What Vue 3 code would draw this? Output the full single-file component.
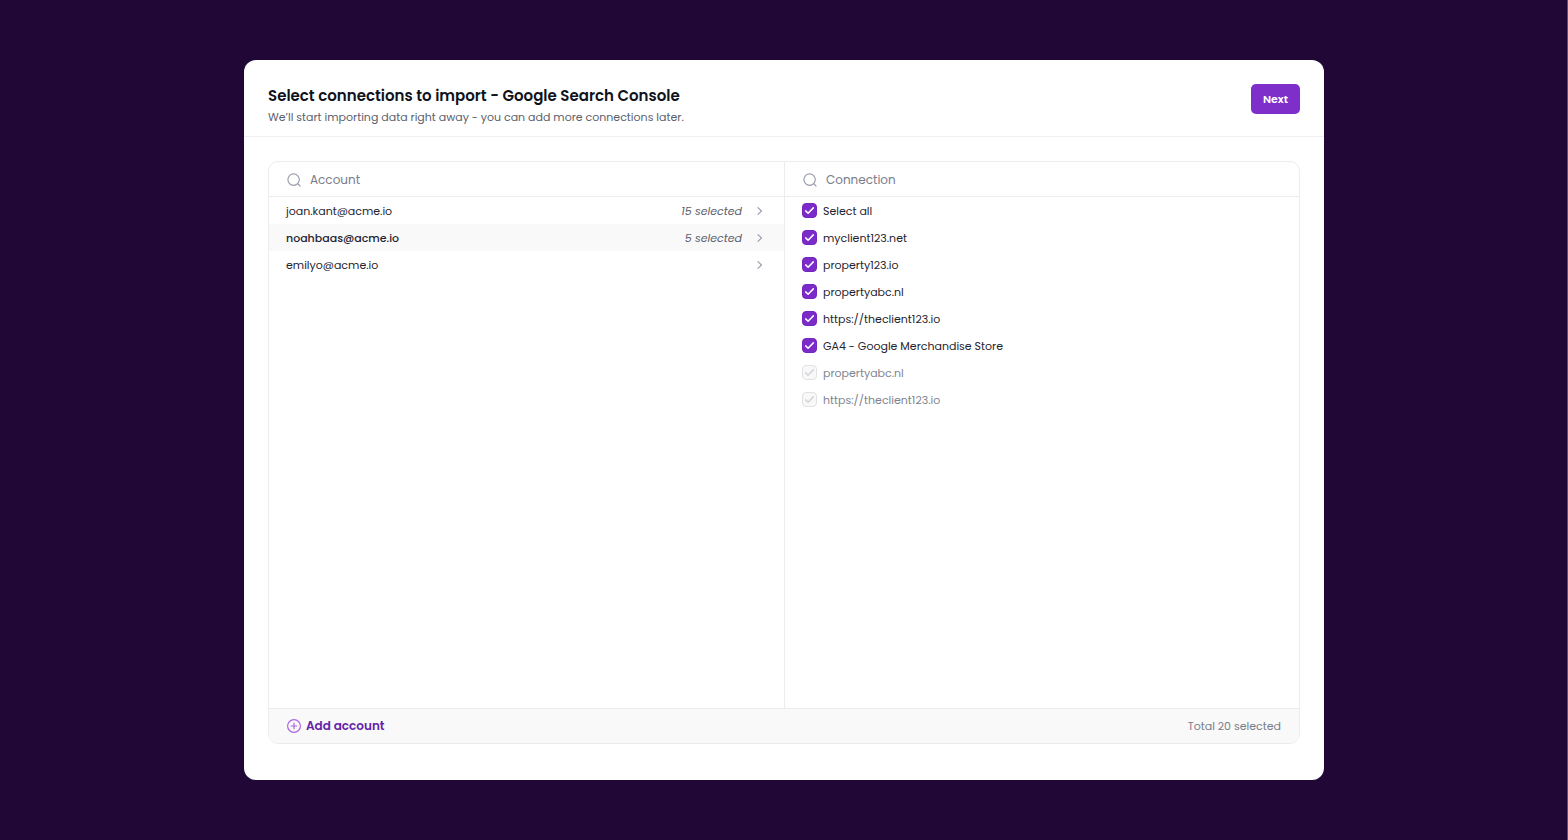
<script setup>
import { ref, computed } from 'vue'

const accountQuery = ref('')
const connectionQuery = ref('')
const active = ref('noahbaas@acme.io')

const accounts = ref([
  { email: 'joan.kant@acme.io', selected: 15 },
  { email: 'noahbaas@acme.io', selected: 5 },
  { email: 'emilyo@acme.io', selected: 0 },
])

const connections = ref([
  { id: 'all', name: 'Select all', checked: true, disabled: false },
  { id: 'c1', name: 'myclient123.net', checked: true, disabled: false },
  { id: 'c2', name: 'property123.io', checked: true, disabled: false },
  { id: 'c3', name: 'propertyabc.nl', checked: true, disabled: false },
  { id: 'c4', name: 'https://theclient123.io', checked: true, disabled: false },
  { id: 'c5', name: 'GA4 - Google Merchandise Store', checked: true, disabled: false },
  { id: 'c6', name: 'propertyabc.nl', checked: true, disabled: true },
  { id: 'c7', name: 'https://theclient123.io', checked: true, disabled: true },
])

const total = computed(() => accounts.value.reduce((sum, a) => sum + a.selected, 0))
</script>

<template>
  <div class="page">
    <main class="dialog">
      <header class="head">
        <div>
          <h1 class="title">Select connections to import - Google Search Console</h1>
          <p class="subtitle">We’ll start importing data right away - you can add more connections later.</p>
        </div>
        <button type="button" class="next">Next</button>
      </header>

      <section class="panel">
        <div class="columns">
          <div class="column">
            <label class="search">
              <svg class="search-icon" viewBox="0 0 14 14" aria-hidden="true">
                <circle cx="6.6" cy="6.6" r="5.7" />
                <path d="M10.7 10.7 13 13" />
              </svg>
              <input v-model="accountQuery" class="search-input" type="text" placeholder="Account" aria-label="Account" />
            </label>
            <button
              v-for="a in accounts"
              :key="a.email"
              type="button"
              class="account"
              :class="{ active: a.email === active }"
              @click="active = a.email"
            >
              <span class="email">{{ a.email }}</span>
              <span v-if="a.selected" class="count">{{ a.selected }} selected</span>
              <svg class="chevron" viewBox="0 0 6 8" aria-hidden="true"><path d="M1 .7 4.5 4 1 7.3" /></svg>
            </button>
          </div>

          <div class="column">
            <label class="search">
              <svg class="search-icon" viewBox="0 0 14 14" aria-hidden="true">
                <circle cx="6.6" cy="6.6" r="5.7" />
                <path d="M10.7 10.7 13 13" />
              </svg>
              <input v-model="connectionQuery" class="search-input" type="text" placeholder="Connection" aria-label="Connection" />
            </label>
            <label v-for="c in connections" :key="c.id" class="connection" :class="{ disabled: c.disabled }">
              <span class="box">
                <input v-model="c.checked" class="check" type="checkbox" :disabled="c.disabled" />
                <svg class="tick" viewBox="0 0 15 15" aria-hidden="true"><path d="M3.7 7.9 6.1 10.2 11.3 4.9" /></svg>
              </span>
              <span>{{ c.name }}</span>
            </label>
          </div>
        </div>

        <footer class="foot">
          <button type="button" class="add">
            <svg class="plus" viewBox="0 0 14 14" aria-hidden="true">
              <circle cx="7" cy="7" r="6.4" />
              <path d="M7 4.2v5.6M4.2 7h5.6" />
            </svg>
            Add account
          </button>
          <span class="total">Total {{ total }} selected</span>
        </footer>
      </section>
    </main>
  </div>
</template>

<style>
body {
  background: #200736;
}
</style>

<style scoped>
.page {
  box-sizing: border-box;
  min-height: 100vh;
  padding: 60px 24px;
  display: flex;
  justify-content: center;
  background: #200736;
  box-shadow: inset -1px 0 #5f4c70;
  font-family: Poppins, Inter, 'Open Sans', sans-serif;
  font-size: 11px;
  line-height: 16px;
  color: #1f2430;
}

button,
input {
  font-family: inherit;
  margin: 0;
}

button {
  border: 0;
  background: none;
  cursor: pointer;
}

.dialog {
  flex: 1;
  max-width: 1080px;
  display: flex;
  flex-direction: column;
  border-radius: 12px;
  background: #fff;
}

.head {
  display: flex;
  justify-content: space-between;
  align-items: flex-start;
  padding: 24px 24px 11px;
  border-bottom: 1px solid #efeff1;
}

.title {
  margin: 0;
  font-size: 15px;
  line-height: 24px;
  font-weight: 600;
  color: #10131c;
}

.subtitle {
  margin: 1px 0 0;
  font-size: 11px;
  line-height: 16px;
  color: #5b606d;
}

.next {
  height: 30px;
  padding: 0 12px;
  border-radius: 5px;
  background: #7e2fca;
  color: #fff;
  font-size: 11px;
  font-weight: 600;
}

.panel {
  flex: 1;
  display: flex;
  flex-direction: column;
  margin: 24px 24px 36px;
  border: 1px solid #ececee;
  border-radius: 10px;
  overflow: hidden;
}

.columns {
  flex: 1;
  display: grid;
  grid-template-columns: 1fr 1fr;
}

.column + .column {
  border-left: 1px solid #ececee;
}

.search {
  box-sizing: border-box;
  display: flex;
  align-items: center;
  gap: 9px;
  height: 35px;
  padding: 2px 18px 0;
  border-bottom: 1px solid #ececee;
}

.search-icon {
  width: 14px;
  height: 14px;
  fill: none;
  stroke: #9a9eab;
  stroke-width: 1.2;
  stroke-linecap: round;
}

.search-input {
  flex: 1;
  min-width: 0;
  padding: 0;
  border: 0;
  outline: 0;
  background: none;
  font-size: 12px;
  line-height: 18px;
  color: #1f2430;
}

.search-input::placeholder {
  color: #787d8a;
  opacity: 1;
}

.account {
  display: flex;
  align-items: center;
  gap: 15px;
  width: 100%;
  height: 27px;
  padding: 0 21px 0 17px;
  font-size: 11px;
  line-height: 16px;
  color: #1f2430;
  text-align: left;
}

.account.active {
  background: #f9f9fa;
}

.active .email {
  font-weight: 500;
}

.email {
  flex: 1;
}

.count {
  font-style: italic;
  color: #5b606d;
}

.chevron {
  width: 6px;
  height: 8px;
  fill: none;
  stroke: #9a9eab;
  stroke-width: 1.1;
  stroke-linecap: round;
  stroke-linejoin: round;
}

.connection {
  display: flex;
  align-items: center;
  gap: 6px;
  height: 27px;
  padding: 0 17px;
}

.connection.disabled {
  color: #7f848f;
}

.box {
  display: grid;
  width: 15px;
  height: 15px;
}

.check,
.tick {
  grid-area: 1 / 1;
  width: 15px;
  height: 15px;
}

.check {
  appearance: none;
  box-sizing: border-box;
  border: 1px solid #d9d9de;
  border-radius: 4px;
  background: #fff;
}

.check:checked {
  border-color: #7427bf;
  background: #7a2bc8;
}

.check:disabled {
  border-color: #e2e2e5;
  background: #f8f8f9;
}

.tick {
  visibility: hidden;
  pointer-events: none;
  fill: none;
  stroke: #fff;
  stroke-width: 1.5;
  stroke-linecap: round;
  stroke-linejoin: round;
}

.check:checked + .tick {
  visibility: visible;
}

.check:disabled + .tick {
  stroke: #d3d4d8;
}

.foot {
  display: flex;
  align-items: center;
  justify-content: space-between;
  height: 34px;
  padding: 0 18px;
  border-top: 1px solid #ececee;
  background: #f9f9fa;
}

.add {
  display: flex;
  align-items: center;
  gap: 5px;
  padding: 0;
  font-size: 12px;
  line-height: 18px;
  font-weight: 600;
  color: #6523a8;
}

.plus {
  width: 14px;
  height: 14px;
  fill: none;
  stroke: #ab65e4;
  stroke-width: 1.2;
  stroke-linecap: round;
}

.total {
  color: #787d8a;
}
</style>
